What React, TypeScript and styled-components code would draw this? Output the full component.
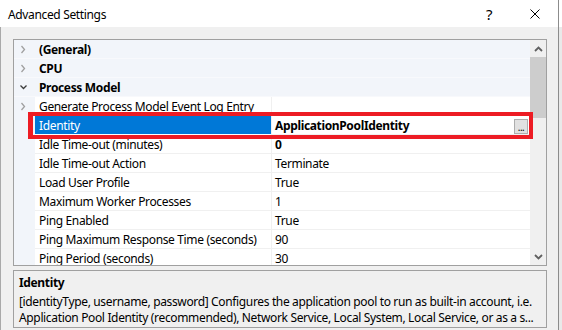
import React from 'react';
import styled, { createGlobalStyle } from 'styled-components';

const Global = createGlobalStyle`
  html, body { margin: 0; padding: 0; width: 562px; height: 330px; overflow: hidden; background: #f3f3f3; }
  body { font-family: "Noto Sans", "Segoe UI", sans-serif; font-size: 12px; letter-spacing: -0.35px; color: #000; }
  * { box-sizing: border-box; }
`;

const Screen = styled.div`
  position: relative;
  display: flex;
  width: 562px;
  height: 330px;
`;

const Window = styled.div`
  width: 559px;
  height: 330px;
  display: flex;
  flex-direction: column;
  background: #f0f0f0;
  border-right: 1px solid #8c8c8c;
`;

const Beyond = styled.div`
  flex: 1;
  background: linear-gradient(#ffffff 0 27px, #e9e9e9 27px);
`;

const TitleBar = styled.div`
  height: 27px;
  background: #ffffff;
  display: flex;
  align-items: center;
  padding-left: 8px;
`;

const Title = styled.div`
  flex: 1;
  font-size: 12px;
  color: #000;
  padding-top: 1px;
`;

const CaptionButton = styled.div`
  width: 46px;
  height: 27px;
  display: flex;
  align-items: center;
  justify-content: center;
  font-size: 15px;
  color: #000;
`;

const Body = styled.div`
  flex: 1;
  display: flex;
  flex-direction: column;
  border-left: 1px solid #a9a9a9;
  padding: 12px 11px 3px 12px;
`;

const Grid = styled.div`
  height: 227px;
  border: 1px solid #a0a0a0;
  display: flex;
  background: #fff;
`;

const Rows = styled.div`
  flex: 1;
  overflow: hidden;
  display: flex;
  flex-direction: column;
`;

const CategoryRowBox = styled.div`
  flex: none;
  height: 19px;
  display: grid;
  grid-template-columns: 21px 1fr;
  background: #f2f5fa;
  border-bottom: 1px solid #f8f9fc;
`;

const Margin = styled.div`
  display: flex;
  align-items: center;
  padding-left: 5px;
  background: #f2f5fa;
`;

const CategoryLabel = styled.div`
  font-weight: 700;
  padding: 1px 0 0 4px;
  line-height: 17px;
  white-space: nowrap;
`;

const PropRowBox = styled.div`
  flex: none;
  height: 19px;
  display: grid;
  grid-template-columns: 21px 236px 1px 1fr;
`;

const NameCell = styled.div<{ $selected?: boolean }>`
  line-height: 17px;
  padding: 1px 0 0 4px;
  white-space: nowrap;
  overflow: hidden;
  background: ${(p) => (p.$selected ? '#0078d7' : '#ffffff')};
  color: ${(p) => (p.$selected ? '#ffffff' : '#000000')};
  border-bottom: 1px solid ${(p) => (p.$selected ? '#ffffff' : '#f0f0f0')};
`;

const Divider = styled.div`
  background: #f0f0f0;
`;

const ValueCell = styled.div<{ $bold?: boolean }>`
  display: flex;
  align-items: flex-start;
  justify-content: space-between;
  line-height: 17px;
  padding: 1px 2px 0 3px;
  font-weight: ${(p) => (p.$bold ? 700 : 400)};
  border-bottom: 1px solid #f0f0f0;
  white-space: nowrap;
`;

const EllipsisButton = styled.div`
  margin-top: 2px;
  width: 14px;
  height: 15px;
  border: 1px solid #adadad;
  background: #e1e1e1;
  font-size: 10px;
  font-weight: 400;
  line-height: 14px;
  text-align: center;
  letter-spacing: -0.5px;
`;

const ScrollBar = styled.div`
  width: 16px;
  display: flex;
  flex-direction: column;
  background: #f0f0f0;
`;

const ScrollArrow = styled.div`
  height: 17px;
  display: flex;
  align-items: center;
  justify-content: center;
`;

const Track = styled.div`
  flex: 1;
  display: flex;
  flex-direction: column;
`;

const Thumb = styled.div`
  height: 61px;
  background: #cdcdcd;
`;

const Description = styled.div`
  margin-top: 4px;
  height: 58px;
  border: 1px solid #a0a0a0;
  padding: 3px 0 0 5px;
  display: flex;
  flex-direction: column;
`;

const DescTitle = styled.div`
  font-weight: 700;
  line-height: 17px;
  margin-bottom: 3px;
`;

const DescLine = styled.div`
  line-height: 16px;
  white-space: nowrap;
`;

const Annotation = styled.div`
  position: absolute;
  left: 28px;
  top: 112px;
  width: 505px;
  height: 27px;
  border: 4px solid #ed1c24;
  border-left-width: 5px;
  pointer-events: none;
`;

const Chevron = ({ open }: { open?: boolean }) =>
  open ? (
    <svg width="9" height="8" viewBox="0 0 9 8">
      <path d="M1.5 2.5 L4.5 5.5 L7.5 2.5" fill="none" stroke="#3c3c3c" strokeWidth="1.3" />
    </svg>
  ) : (
    <svg width="9" height="9" viewBox="0 0 9 9">
      <path d="M2.5 1 L5.5 4.5 L2.5 8" fill="none" stroke="#a0a0a0" strokeWidth="1.3" />
    </svg>
  );

const ScrollChevron = ({ up }: { up?: boolean }) => (
  <svg width="9" height="6" viewBox="0 0 9 6">
    <path
      d={up ? 'M1 5 L4.5 1.5 L8 5' : 'M1 1 L4.5 4.5 L8 1'}
      fill="none"
      stroke="#606060"
      strokeWidth="1.8"
    />
  </svg>
);

const CloseIcon = () => (
  <svg width="10" height="10" viewBox="0 0 10 10">
    <path d="M0.5 0.5 L9.5 9.5 M9.5 0.5 L0.5 9.5" stroke="#000" strokeWidth="1" />
  </svg>
);

type Prop = { name: string; value: string; bold?: boolean; expandable?: boolean; selected?: boolean; button?: boolean };

const props: Prop[] = [
  { name: 'Generate Process Model Event Log Entry', value: '', expandable: true },
  { name: 'Identity', value: 'ApplicationPoolIdentity', bold: true, selected: true, button: true },
  { name: 'Idle Time-out (minutes)', value: '0', bold: true },
  { name: 'Idle Time-out Action', value: 'Terminate' },
  { name: 'Load User Profile', value: 'True' },
  { name: 'Maximum Worker Processes', value: '1' },
  { name: 'Ping Enabled', value: 'True' },
  { name: 'Ping Maximum Response Time (seconds)', value: '90' },
  { name: 'Ping Period (seconds)', value: '30' },
];

const CategoryRow = ({ label, open }: { label: string; open?: boolean }) => (
  <CategoryRowBox>
    <Margin>
      <Chevron open={open} />
    </Margin>
    <CategoryLabel>{label}</CategoryLabel>
  </CategoryRowBox>
);

const PropRow = ({ p }: { p: Prop }) => (
  <PropRowBox>
    <Margin>{p.expandable && <Chevron />}</Margin>
    <NameCell $selected={p.selected}>{p.name}</NameCell>
    <Divider />
    <ValueCell $bold={p.bold}>
      <span>{p.value}</span>
      {p.button && <EllipsisButton>...</EllipsisButton>}
    </ValueCell>
  </PropRowBox>
);

export default function App() {
  return (
    <Screen>
      <Global />
      <Window>
        <TitleBar>
          <Title>Advanced Settings</Title>
          <CaptionButton>?</CaptionButton>
          <CaptionButton>
            <CloseIcon />
          </CaptionButton>
        </TitleBar>
        <Body>
          <Grid>
            <Rows>
              <CategoryRow label="(General)" />
              <CategoryRow label="CPU" />
              <CategoryRow label="Process Model" open />
              {props.map((p) => (
                <PropRow key={p.name} p={p} />
              ))}
            </Rows>
            <ScrollBar>
              <ScrollArrow>
                <ScrollChevron up />
              </ScrollArrow>
              <Track>
                <Thumb />
              </Track>
              <ScrollArrow>
                <ScrollChevron />
              </ScrollArrow>
            </ScrollBar>
          </Grid>
          <Description>
            <DescTitle>Identity</DescTitle>
            <DescLine>
              [identityType, username, password] Configures the application pool to run as built-in account, i.e.
            </DescLine>
            <DescLine>
              Application Pool Identity (recommended), Network Service, Local System, Local Service, or as a s...
            </DescLine>
          </Description>
        </Body>
      </Window>
      <Beyond />
      <Annotation />
    </Screen>
  );
}
